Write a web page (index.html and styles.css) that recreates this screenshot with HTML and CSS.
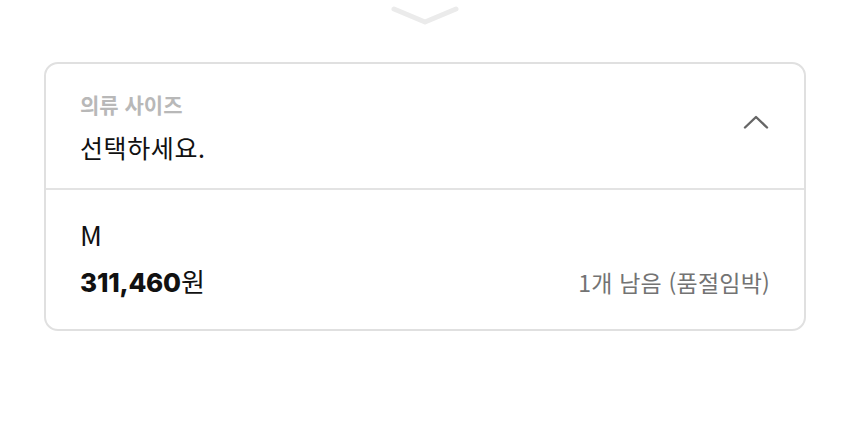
FILE: index.html
```html
<!DOCTYPE html>
<html lang="ko">
<head>
<meta charset="utf-8">
<link rel="stylesheet" href="styles.css">
</head>
<body>
<div class="sheet">
  <div class="handle">
    <svg width="70" height="24" viewBox="0 0 70 24"><path d="M4 6 L35 19 L66 6" fill="none" stroke="#ebebeb" stroke-width="5" stroke-linecap="round" stroke-linejoin="round"/></svg>
  </div>
  <div class="card">
    <div class="head">
      <div class="head-text">
        <div class="label">의류 사이즈</div>
        <div class="value">선택하세요.</div>
      </div>
      <svg class="chev" width="28" height="18" viewBox="0 0 28 18"><path d="M3 14.5 L14 4 L25 14.5" fill="none" stroke="#666" stroke-width="2.4" stroke-linecap="round" stroke-linejoin="round"/></svg>
    </div>
    <div class="option">
      <div class="size">M</div>
      <div class="row">
        <div class="price"><b>311,460</b>원</div>
        <div class="stock">1개 남음 (품절임박)</div>
      </div>
    </div>
  </div>
</div>
</body>
</html>
```
FILE: styles.css
```css
html, body { margin: 0; padding: 0; background: #fff; }
body { font-family: "Noto Sans CJK KR", "Noto Sans", sans-serif; color: #111; }
.sheet { width: 850px; height: 443px; }
.handle { height: 62px; display: flex; justify-content: center; align-items: flex-start; }
.handle svg { display: block; margin-top: 3px; }
.card { margin: 0 44px; border: 2px solid #e0e0e0; border-radius: 14px; box-sizing: border-box; }
.head { display: flex; align-items: center; justify-content: space-between; padding: 28px 34px 25px 34px; border-bottom: 2px solid #e3e3e3; }
.label { font-size: 21px; line-height: 24px; color: #b8b8b8; font-weight: 700; }
.value { font-size: 25px; line-height: 32px; margin-top: 15px; color: #111; letter-spacing: 0.6px; }
.chev { display: block; margin-top: -12px; }
.option { padding: 29px 34px 30px 34px; }
.size { font-size: 27px; line-height: 32px; color: #111; }
.row { display: flex; justify-content: space-between; align-items: center; margin-top: 14px; }
.price { font-size: 26px; line-height: 32px; }
.price b { font-weight: 800; font-family: "Inter", "Noto Sans CJK KR", sans-serif; letter-spacing: -0.2px; }
.stock { font-size: 23px; line-height: 32px; color: #737373; letter-spacing: 0.2px; }
```
